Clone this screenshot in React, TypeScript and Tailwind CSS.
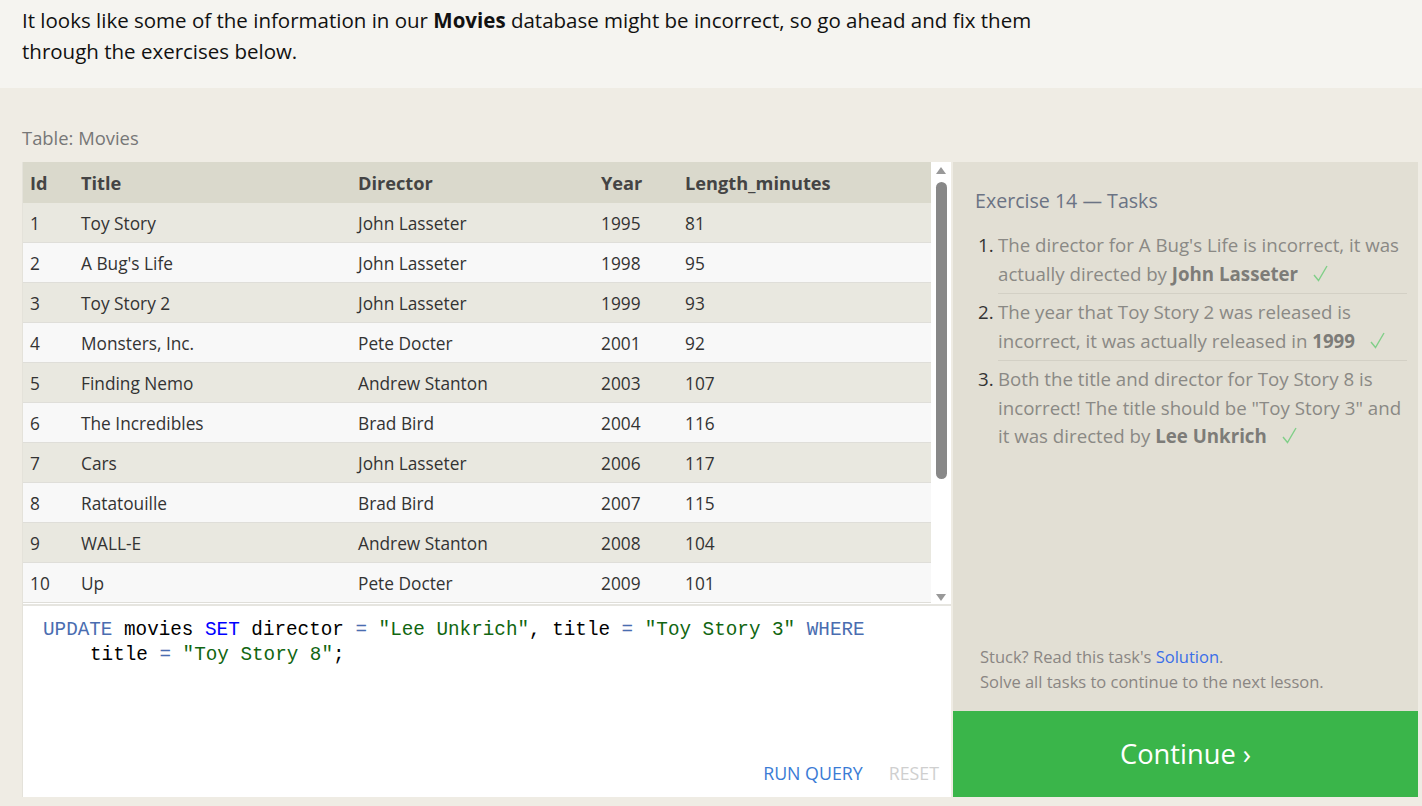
import React from 'react';

const movies = [
  { id: 1, title: 'Toy Story', director: 'John Lasseter', year: 1995, length: 81 },
  { id: 2, title: "A Bug's Life", director: 'John Lasseter', year: 1998, length: 95 },
  { id: 3, title: 'Toy Story 2', director: 'John Lasseter', year: 1999, length: 93 },
  { id: 4, title: 'Monsters, Inc.', director: 'Pete Docter', year: 2001, length: 92 },
  { id: 5, title: 'Finding Nemo', director: 'Andrew Stanton', year: 2003, length: 107 },
  { id: 6, title: 'The Incredibles', director: 'Brad Bird', year: 2004, length: 116 },
  { id: 7, title: 'Cars', director: 'John Lasseter', year: 2006, length: 117 },
  { id: 8, title: 'Ratatouille', director: 'Brad Bird', year: 2007, length: 115 },
  { id: 9, title: 'WALL-E', director: 'Andrew Stanton', year: 2008, length: 104 },
  { id: 10, title: 'Up', director: 'Pete Docter', year: 2009, length: 101 },
];

const cols = 'grid grid-cols-[51px_277px_243px_84px_1fr]';

// thin green tick after each solved task
function Check() {
  return (
    <svg width="15" height="17" viewBox="0 0 15 17" className="inline-block ml-[15px] align-[-1px]">
      <path d="M1 10 L5.5 15.5 L14 1" fill="none" stroke="#80cf88" strokeWidth="1.4" />
    </svg>
  );
}

export default function App() {
  return (
    <div className="min-h-[806px] bg-[#efece4] font-['Open_Sans',sans-serif] text-[#222]">
      <div className="bg-[#f5f4f0] px-[22px] pt-[5px] h-[88px] text-[20.5px] leading-[31px] text-[#111]">
        It looks like some of the information in our <b>Movies</b> database might be incorrect, so go ahead and fix them
        <br />
        through the exercises below.
      </div>

      <div className="pl-[22px] pr-[4px] pt-[36px]">
        <div className="text-[18.4px] text-[#777] h-[38px] leading-[28px]">Table: Movies</div>

        <div className="flex gap-[2px] h-[635px]">
          <div className="w-[929px] flex flex-col bg-white border-l border-[#e4e2da]">
            <div className="flex h-[442px]">
              <div className="flex-1 text-[17.3px] leading-[40px]">
                <div className={`${cols} bg-[#dad9cc] h-[41px] leading-[42px] font-bold text-[#444] text-[18.2px]`}>
                  <div className="pl-[7px]">Id</div>
                  <div className="pl-[7px]">Title</div>
                  <div className="pl-[7px]">Director</div>
                  <div className="pl-[7px]">Year</div>
                  <div className="pl-[7px]">Length_minutes</div>
                </div>
                {movies.map((m, i) => (
                  <div
                    key={m.id}
                    className={`${cols} h-[40px] leading-[42px] border-b border-[#dfded9] text-[#333] ${i % 2 === 0 ? 'bg-[#e9e8e0]' : 'bg-[#f8f8f8]'}`}
                  >
                    <div className="pl-[7px]">{m.id}</div>
                    <div className="pl-[7px]">{m.title}</div>
                    <div className="pl-[7px]">{m.director}</div>
                    <div className="pl-[7px]">{m.year}</div>
                    <div className="pl-[7px]">{m.length}</div>
                  </div>
                ))}
              </div>
              <div className="w-[20px] bg-white flex flex-col items-center pt-[5px] pb-[3px]">
                <svg width="10" height="7" viewBox="0 0 10 7" className="mb-[8px]">
                  <path d="M0 7 L5 0 L10 7 Z" fill="#999" />
                </svg>
                <div className="w-[11px] h-[297px] rounded-full bg-[#888]" />
                <div className="flex-1" />
                <svg width="10" height="7" viewBox="0 0 10 7">
                  <path d="M0 0 L10 0 L5 7 Z" fill="#999" />
                </svg>
              </div>
            </div>
            <div className="h-[2px] bg-[#e6e5e0]" />

            <div className="flex-1 flex flex-col px-[20px] pt-[12px]">
              <div className="font-['Liberation_Mono',monospace] text-[19.3px] leading-[25px] text-black">
                <div>
                  <span className="text-[#4a6db0]">UPDATE</span> movies <span className="text-[#0000ff]">SET</span> director{' '}
                  <span className="text-[#4a6db0]">=</span> <span className="text-[#116611]">"Lee Unkrich"</span>, title{' '}
                  <span className="text-[#4a6db0]">=</span> <span className="text-[#116611]">"Toy Story 3"</span>{' '}
                  <span className="text-[#4a6db0]">WHERE</span>
                </div>
                <div className="pl-[47px]">
                  title <span className="text-[#4a6db0]">=</span> <span className="text-[#116611]">"Toy Story 8"</span>;
                </div>
              </div>
              <div className="flex-1" />
              <div className="flex justify-end gap-[26px] pb-[12px] text-[17.8px] leading-[24px] mr-[-8px]">
                <span className="text-[#3a7bd5]">RUN QUERY</span>
                <span className="text-[#cfcfcf]">RESET</span>
              </div>
            </div>
          </div>

          <div className="w-[465px] flex flex-col bg-[#e2dfd4]">
            <div className="flex-1 pl-[22px] pr-[11px] pt-[25px]">
              <div className="text-[19.6px] leading-[28px] text-[#6b7384]">Exercise 14 — Tasks</div>
              <ol className="mt-[12px] text-[18.7px] leading-[28.5px] text-[#8a8985]">
                {[
                  <>
                    The director for A Bug's Life is incorrect, it was actually directed by{' '}
                    <b className="text-[#7d7c78]">John Lasseter</b>
                    <Check />
                  </>,
                  <>
                    The year that Toy Story 2 was released is incorrect, it was actually released in{' '}
                    <b className="text-[#7d7c78]">1999</b>
                    <Check />
                  </>,
                  <>
                    Both the title and director for Toy Story 8 is incorrect! The title should be "Toy Story 3" and it
                    was directed by <b className="text-[#7d7c78]">Lee Unkrich</b>
                    <Check />
                  </>,
                ].map((t, i) => (
                  <li key={i} className="flex pt-[4px]">
                    <span className="w-[23px] pl-[3px] shrink-0 text-[#333]">{i + 1}.</span>
                    <div className={`flex-1 pb-[5px] ${i < 2 ? 'border-b border-[#d3d0c5]' : ''}`}>{t}</div>
                  </li>
                ))}
              </ol>
            </div>
            <div className="px-[27px] pb-[17px] text-[16.5px] leading-[25px] text-[#8a8683]">
              Stuck? Read this task's <span className="text-[#3a6ee8]">Solution</span>.
              <br />
              Solve all tasks to continue to the next lesson.
            </div>
            <div className="h-[86px] bg-[#3ab54a] flex items-center justify-center text-white text-[27.3px]">
              Continue ›
            </div>
          </div>
        </div>
      </div>
    </div>
  );
}
